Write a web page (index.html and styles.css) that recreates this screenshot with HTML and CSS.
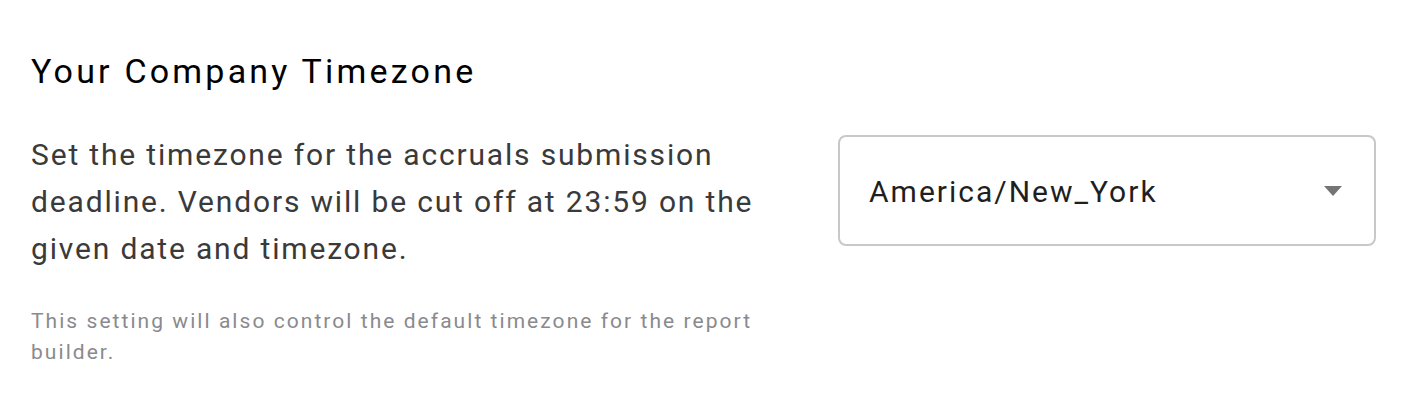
FILE: index.html
```html
<!DOCTYPE html>
<html>
<head>
<meta charset="utf-8">
<link rel="stylesheet" href="styles.css">
</head>
<body>
<section class="setting">
  <h2 class="title">Your Company Timezone</h2>
  <div class="row">
    <div class="info">
      <p class="desc">Set the timezone for the accruals submission deadline. Vendors will be cut off at 23:59 on the given date and timezone.</p>
      <p class="note">This setting will also control the default timezone for the report builder.</p>
    </div>
    <div class="select">
      <span class="value">America/New_York</span>
      <svg class="caret" width="18" height="10" viewBox="0 0 18 10"><path d="M0 0 L18 0 L9 10 Z" fill="#757575"/></svg>
    </div>
  </div>
</section>
</body>
</html>
```
FILE: styles.css
```css
html, body {
  margin: 0;
  padding: 0;
  background: #fff;
}
body {
  font-family: Roboto, "Liberation Sans", sans-serif;
}
.setting {
  padding: 46px 48px 0 31px;
}
.title {
  margin: 0;
  font-size: 34px;
  font-weight: 400;
  line-height: 50px;
  letter-spacing: 3.2px;
  color: #000;
}
.row {
  display: flex;
  justify-content: space-between;
  margin-top: 35px;
  align-items: flex-start;
}
.info {
  width: 765px;
}
.desc {
  margin: 0;
  font-size: 30px;
  line-height: 47px;
  letter-spacing: 1.83px;
  color: #3a3a3a;
}
.note {
  margin: 34px 0 0;
  font-size: 21px;
  line-height: 31px;
  letter-spacing: 2.05px;
  color: #8a8a8e;
}
.select {
  flex: 0 0 538px;
  box-sizing: border-box;
  height: 111px;
  margin-top: 4px;
  border: 2px solid #c8c8c8;
  border-radius: 8px;
  display: flex;
  align-items: center;
  justify-content: space-between;
  padding: 1px 32px 0 29px;
}
.value {
  font-size: 30px;
  letter-spacing: 2px;
  color: #1f1f1f;
}
.caret {
  display: block;
}
```
